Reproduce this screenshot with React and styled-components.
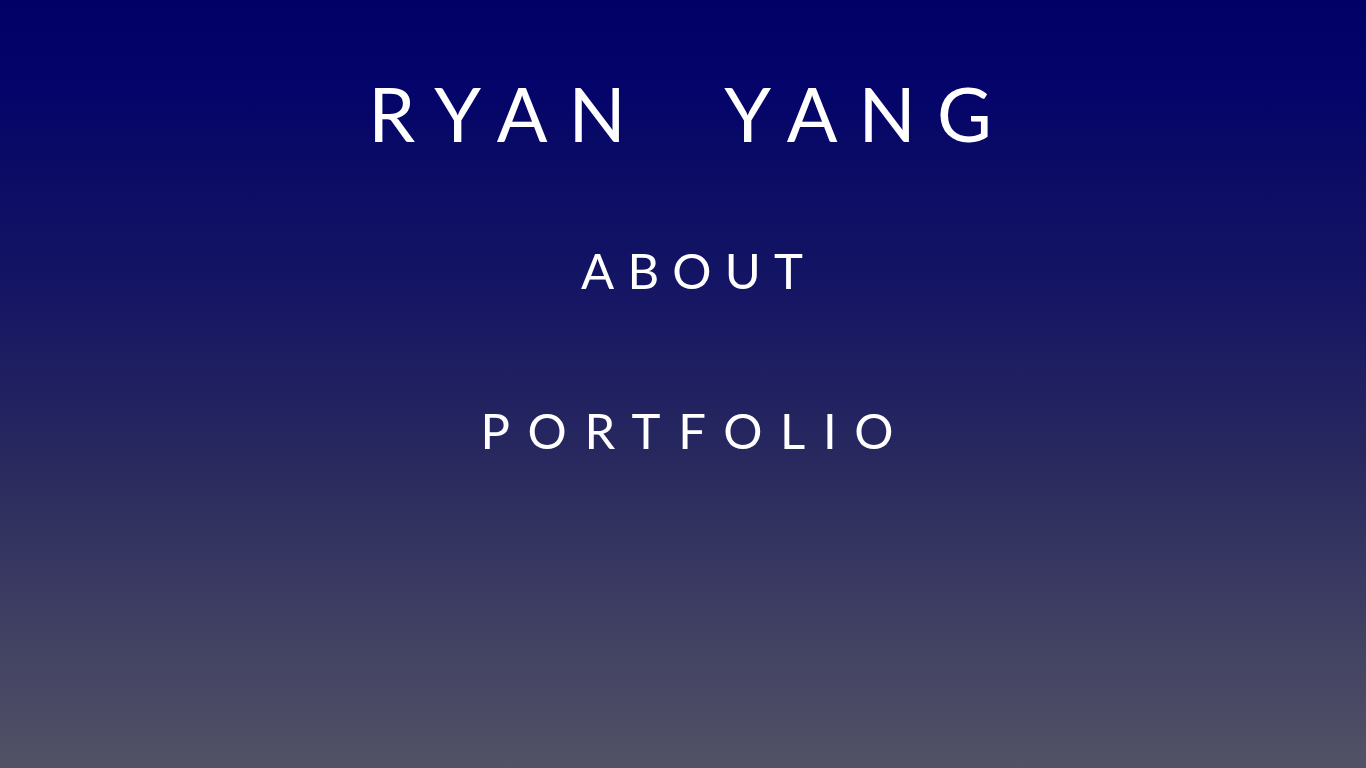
import React from "react";
import styled, { createGlobalStyle } from "styled-components";

const Global = createGlobalStyle`
  html, body { margin: 0; padding: 0; height: 100%; }
  body { font-family: "Lato", "DejaVu Sans", sans-serif; }
`;

const Page = styled.div`
  height: 768px;
  background: linear-gradient(
    to bottom,
    #000066 0%,
    #04046a 12%,
    #0a0a66 20%,
    #161664 39%,
    #28285f 59%,
    #3c3c62 78%,
    #525266 100%
  );
  display: flex;
  flex-direction: column;
  align-items: center;
  color: #ffffff;
`;

const Title = styled.h1`
  margin: 0;
  padding-top: 73px;
  font-size: 75px;
  font-weight: 400;
  letter-spacing: 0.28em;
  line-height: 80px;
  text-indent: 0.2em;
  white-space: pre;
`;

const Nav = styled.nav`
  display: flex;
  flex-direction: column;
  align-items: center;
  gap: 108px;
  margin-top: 91px;
`;

const NavLink = styled.a`
  font-size: 49px;
  line-height: 52px;
  letter-spacing: ${(p) => p.$spacing};
  text-indent: ${(p) => p.$spacing};
  padding-left: ${(p) => p.$shift}px;
  color: #ffffff;
  text-decoration: none;
  white-space: pre;
`;

export default function App() {
  return (
    <>
      <Global />
      <Page>
        <Title>RYAN  YANG</Title>
        <Nav>
          <NavLink href="#about" $spacing="0.27em" $shift={18}>ABOUT</NavLink>
          <NavLink href="#portfolio" $spacing="0.36em" $shift={8}>PORTFOLIO</NavLink>
        </Nav>
      </Page>
    </>
  );
}
